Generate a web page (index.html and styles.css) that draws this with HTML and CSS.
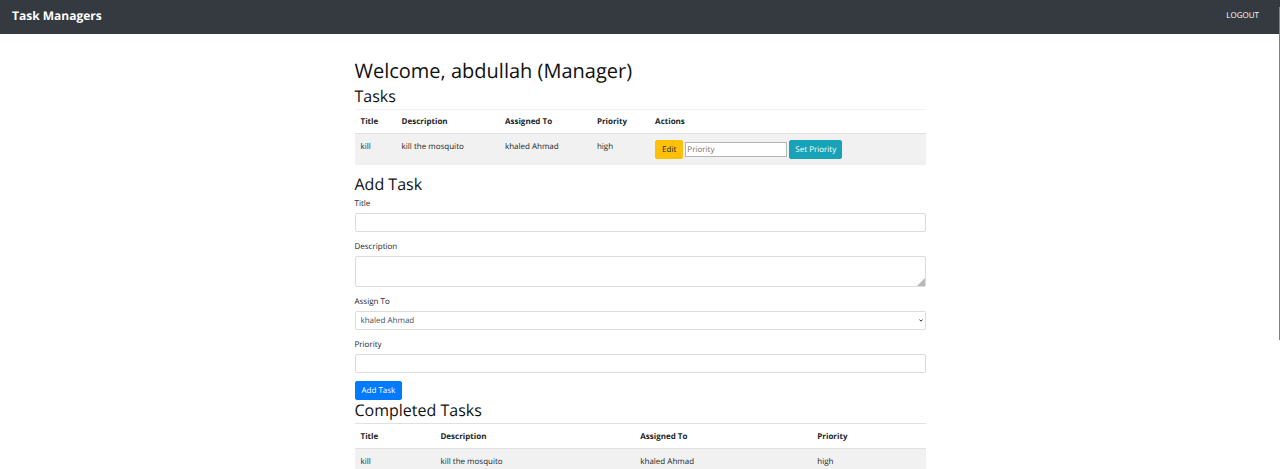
FILE: index.html
```html
<!DOCTYPE html>
<html lang="en">
<head>
<meta charset="utf-8">
<title>Task Managers</title>
<link rel="stylesheet" href="styles.css">
</head>
<body>
<header class="navbar">
  <a class="brand" href="#">Task Managers</a>
  <a class="logout" href="#">LOGOUT</a>
</header>
<div class="scroll-thumb"></div>
<main class="container">
  <h1>Welcome, abdullah (Manager)</h1>
  <h2>Tasks</h2>
  <table class="table tasks">
    <thead>
      <tr><th class="c-title">Title</th><th class="c-desc">Description</th><th class="c-assigned">Assigned To</th><th class="c-priority">Priority</th><th>Actions</th></tr>
    </thead>
    <tbody>
      <tr>
        <td>kill</td><td>kill the mosquito</td><td>khaled Ahmad</td><td>high</td>
        <td class="c-actions">
          <form class="actions">
            <button class="btn btn-warning" type="button">Edit</button>
            <input class="priority-input" type="text" placeholder="Priority" aria-label="Priority">
            <button class="btn btn-info" type="button">Set Priority</button>
          </form>
        </td>
      </tr>
    </tbody>
  </table>

  <h2>Add Task</h2>
  <form class="task-form">
    <div class="field">
      <label for="title">Title</label>
      <input class="control" id="title" type="text">
    </div>
    <div class="field">
      <label for="description">Description</label>
      <div class="control-wrap">
        <textarea class="control area" id="description"></textarea>
        <svg class="grip" viewBox="0 0 8 8" aria-hidden="true"><path d="M0 8 8 0V8Z"/></svg>
      </div>
    </div>
    <div class="field">
      <label for="assign">Assign To</label>
      <div class="control-wrap">
        <select class="control" id="assign"><option>khaled Ahmad</option></select>
        <svg class="chevron" viewBox="0 0 4 3" aria-hidden="true"><path d="M.4.5 2 2.2 3.6.5"/></svg>
      </div>
    </div>
    <div class="field">
      <label for="priority">Priority</label>
      <input class="control" id="priority" type="text">
    </div>
    <button class="btn btn-primary" type="button">Add Task</button>
  </form>

  <h2>Completed Tasks</h2>
  <table class="table completed">
    <thead>
      <tr><th class="c-title">Title</th><th class="c-desc">Description</th><th class="c-assigned">Assigned To</th><th>Priority</th></tr>
    </thead>
    <tbody>
      <tr><td>kill</td><td>kill the mosquito</td><td>khaled Ahmad</td><td>high</td></tr>
    </tbody>
  </table>
</main>
</body>
</html>
```
FILE: styles.css
```css
* { box-sizing: border-box; }

html { scrollbar-width: none; }

body {
  margin: 0;
  background: #fff;
  color: #212529;
  font-family: "Open Sans", "Noto Sans", sans-serif;
  font-size: 8px;
  line-height: 12px;
  text-rendering: geometricPrecision;
}

input, select, textarea, button { font: inherit; text-rendering: inherit; }

.navbar {
  display: flex;
  align-items: center;
  justify-content: space-between;
  padding: 7px 21px 9px 12px;
  background: #343a40;
}

.navbar a { color: #fff; text-decoration: none; }
.brand { font-size: 12px; font-weight: 700; line-height: 18px; }

.scroll-thumb {
  position: fixed;
  top: 7px;
  right: 0;
  width: 1px;
  height: 71%;
  background: #808080;
}

.container {
  max-width: 571px;
  margin: 0 auto;
  padding-top: 25px;
}

h1, h2 { margin: 0; font-weight: 400; color: #111; }
h1 { margin-bottom: 3px; font-size: 20px; line-height: 24px; }
h2 { margin-bottom: 3px; font-size: 16px; line-height: 20px; }

.table {
  width: 100%;
  margin-bottom: 9px;
  border-collapse: separate;
  border-spacing: 0;
  table-layout: fixed;
}

.table th, .table td {
  padding: 6px;
  text-align: left;
  vertical-align: top;
}

.table th {
  padding-bottom: 5px;
  border-top: 1px solid #dee2e6;
  border-bottom: 1px solid #dee2e6;
  font-weight: 700;
}

.tasks th { border-top-color: #eff1f3; }
.completed th { padding-top: 7px; }
.table td { padding-top: 7px; background: #f1f1f1; }
.table .c-actions { padding-top: 6px; }

.tasks .c-title { width: 7.2%; }
.tasks .c-desc { width: 18.1%; }
.tasks .c-assigned { width: 16.1%; }
.tasks .c-priority { width: 10.2%; }
.completed .c-title { width: 14%; }
.completed .c-desc { width: 35%; }
.completed .c-assigned { width: 31%; }

.actions { display: flex; align-items: center; gap: 2px; }

.btn {
  padding: 3px 5px;
  border: 1px solid transparent;
  border-radius: 2px;
  line-height: 11px;
  color: #fff;
}

.btn-warning { padding: 3px 6px; background: #ffc107; border-color: #ffc107; color: #212529; }
.btn-info { background: #17a2b8; border-color: #17a2b8; }
.btn-primary { background: #007bff; border-color: #007bff; }

.priority-input {
  width: 102px;
  height: 15px;
  padding: 0 1px;
  border: 1px solid #b5b5b5;
  background: #fff;
}

.priority-input::placeholder { color: #757575; }

.field { margin-bottom: 8px; }
label { display: block; padding-top: 1px; margin-bottom: 3px; }
.control-wrap { position: relative; }

.control {
  display: block;
  width: 100%;
  height: 19px;
  padding: 2px 5px;
  border: 1px solid #dadde0;
  border-radius: 2px;
  background: #fff;
  color: #495057;
  appearance: none;
}

.area { height: 31px; resize: none; }

.grip {
  position: absolute;
  right: 1px;
  bottom: 1px;
  width: 8px;
  height: 8px;
  fill: #b8b8b8;
}

.chevron {
  position: absolute;
  right: 3px;
  top: 8px;
  width: 4px;
  height: 3px;
  fill: none;
  stroke: #333;
  stroke-width: 1;
}

.task-form .btn { display: block; padding: 3px 6px; }
```
